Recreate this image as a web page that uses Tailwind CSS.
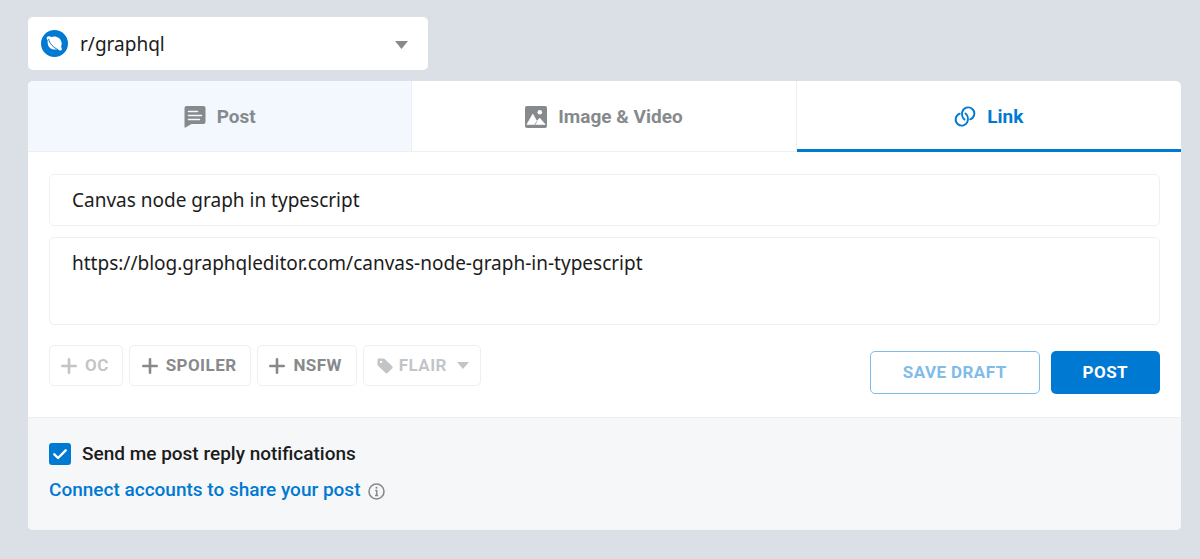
<!DOCTYPE html>
<html lang="en">
<head>
    <meta charset="UTF-8">
    <meta name="viewport" content="width=device-width, initial-scale=1.0">
    <title>Submit to r/graphql</title>
    <script src="https://cdn.jsdelivr.net/npm/@tailwindcss/browser@4"></script>
</head>
<body class="min-h-screen bg-[#dae0e6] pt-[17px] pr-[19px] pb-7 pl-7 font-[Roboto,sans-serif]">
    <!-- Community picker -->
    <div class="relative h-[53px] w-full max-w-[400px] rounded-[5px] bg-white">
        <svg class="pointer-events-none absolute top-[13px] left-[13px] size-[27px]" viewBox="0 0 27 27" aria-hidden="true">
            <circle cx="13.5" cy="13.5" r="13.5" fill="#0079d3" />
            <path d="M6 7c1-1 2.800-.9 4.500.1 4.200-1.700 9 .6 10 5.200.4 1.700.1 3-.4 4.300.8 1.600 1 3 .3 3.600-.9.800-2.500.300-4.300-.8C11.500 20.300 7.600 18.200 6.800 14c-.3-1.200-.2-2.300 0-3.200C5.700 9 5.300 7.700 6 7Z" fill="#fff" />
            <path d="M7.600 9.300c.6 3.700 4.600 8.400 9.400 10.300" fill="none" stroke="#0079d3" stroke-width="1" stroke-linecap="round" />
        </svg>
        <select aria-label="Community" class="h-full w-full appearance-none rounded-[5px] bg-transparent pt-0.5 pr-12 pl-[52px] font-['Noto_Sans',sans-serif] text-[19px] text-[#1c1c1c]">
            <option>r/graphql</option>
        </select>
        <svg class="pointer-events-none absolute top-6 right-5 h-2 w-[13px]" viewBox="0 0 13 8" fill="#878a8c" aria-hidden="true">
            <path d="M0 0h13L6.500 8Z" />
        </svg>
    </div>

    <main class="mt-[11px] overflow-hidden rounded-[5px] bg-white">
        <!-- Post type tabs -->
        <div role="tablist" class="grid h-[71px] grid-cols-3 text-[19px] font-bold text-[#878a8c]">
            <button role="tab" class="flex items-center justify-center gap-[11px] border-r border-b border-[#edeff1] bg-[#f2f8fe] pt-0.5">
                <svg class="size-[22px]" viewBox="0 0 22 22" aria-hidden="true">
                    <path d="M2.500 0h17A2 2 0 0 1 21.500 2v14a2 2 0 0 1-2 2H7.500L1.500 21.500a.7.700 0 0 1-1-.6V2a2 2 0 0 1 2-2Z" fill="currentColor" />
                    <path d="M4.500 5.500h9M4.500 9.500h13M4.500 13.500h11" stroke="#f2f8fe" stroke-width="1.500" stroke-linecap="round" />
                </svg>
                Post
            </button>
            <button role="tab" class="flex items-center justify-center gap-[11px] border-r border-b border-[#edeff1] pt-0.5">
                <svg class="size-[22px]" viewBox="0 0 22 22" aria-hidden="true">
                    <rect width="22" height="22" rx="2" fill="currentColor" />
                    <circle cx="14.800" cy="6.200" r="2.300" fill="#fff" />
                    <path d="M1.800 18.500 7.800 8l4.100 7.300 2.800-3.300 5.600 6.500Z" fill="#fff" stroke="#fff" stroke-width=".6" stroke-linejoin="round" />
                    <path d="m9.800 18.800 2.200-3.500" stroke="currentColor" stroke-width=".8" />
                </svg>
                Image &amp; Video
            </button>
            <button role="tab" aria-selected="true" class="flex items-center justify-center gap-[11px] border-b-3 border-[#0079d3] pt-1 text-[#0079d3]">
                <svg class="size-[22px]" viewBox="0 0 22 22" fill="none" stroke="currentColor" stroke-width="1.900" stroke-linecap="round" aria-hidden="true">
                    <path d="M16.200 13.300A6.100 6.100 0 1 0 8.300 6.100C7.500 9 8.900 12.300 10.500 13.600" />
                    <path d="M5.800 7.700A6.100 6.100 0 1 0 13.700 14.900C14.500 12 13.100 8.700 11.500 7.400" />
                </svg>
                Link
            </button>
        </div>

        <!-- Fields -->
        <div class="px-[21px] pt-[22px] pb-[23px]">
            <div class="flex flex-col gap-[11px] font-['Noto_Sans',sans-serif] text-[19px] leading-[26px] text-[#1c1c1c]">
                <input type="text" aria-label="Title" value="Canvas node graph in typescript" class="h-[52px] w-full rounded-[5px] border border-[#edeff1] px-[22px]">
                <textarea aria-label="Url" class="h-[88px] w-full resize-none rounded-[5px] border border-[#edeff1] px-[22px] py-3">https://blog.graphqleditor.com/canvas-node-graph-in-typescript</textarea>
            </div>

            <div class="mt-5 flex flex-wrap items-start justify-between gap-4 text-[17px] font-bold tracking-wide">
                <div class="flex flex-wrap gap-[6px] text-[#878a8c]">
                    <button disabled class="flex h-[41px] items-center gap-2 rounded-[5px] border border-[#edeff1] pr-[13px] pl-[11px] text-[#878a8c]/50">
                        <svg class="size-4" viewBox="0 0 16 16" stroke="currentColor" stroke-width="2.600" stroke-linecap="round" aria-hidden="true"><path d="M8 1.300v13.400M1.300 8h13.400" /></svg>
                        OC
                    </button>
                    <button class="flex h-[41px] items-center gap-2 rounded-[5px] border border-[#edeff1] pr-[14px] pl-3">
                        <svg class="size-4" viewBox="0 0 16 16" stroke="currentColor" stroke-width="2.600" stroke-linecap="round" aria-hidden="true"><path d="M8 1.300v13.400M1.300 8h13.400" /></svg>
                        SPOILER
                    </button>
                    <button class="flex h-[41px] items-center gap-2 rounded-[5px] border border-[#edeff1] pr-[14px] pl-[11px]">
                        <svg class="size-4" viewBox="0 0 16 16" stroke="currentColor" stroke-width="2.600" stroke-linecap="round" aria-hidden="true"><path d="M8 1.300v13.400M1.300 8h13.400" /></svg>
                        NSFW
                    </button>
                    <button disabled class="flex h-[41px] items-center gap-[6px] rounded-[5px] border border-[#edeff1] pr-[11px] pl-[13px] text-[#878a8c]/50">
                        <svg class="size-4" viewBox="0 0 16 16" fill="currentColor" aria-hidden="true">
                            <path fill-rule="evenodd" d="M1.500.5h5c.5 0 .9.200 1.200.5l7.500 7.300c.6.600.6 1.300 0 1.900l-4.600 4.800c-.6.600-1.300.6-1.900 0L1 7.800c-.3-.3-.5-.7-.5-1.100V1.500a1 1 0 0 1 1-1ZM4 2.700a1.200 1.200 0 1 0 0 2.400 1.200 1.200 0 0 0 0-2.400Z" />
                        </svg>
                        FLAIR
                        <svg class="ml-1 h-[7px] w-3" viewBox="0 0 12 7" fill="currentColor" aria-hidden="true"><path d="M0 0h12L6 7Z" /></svg>
                    </button>
                </div>
                <div class="mt-[6px] flex gap-[11px]">
                    <button disabled class="h-[43px] rounded-[5px] border border-[#7fbce9] px-8 text-[#7fbce9]">SAVE DRAFT</button>
                    <button class="h-[43px] rounded-[5px] bg-[#0079d3] px-8 text-white">POST</button>
                </div>
            </div>
        </div>

        <!-- Notification settings -->
        <div class="flex flex-col items-start gap-3 border-t border-[#edeff1] bg-[#f6f7f8] px-[21px] pt-6 pb-7 text-[19px] leading-6 font-medium">
            <label class="flex items-center gap-[11px] text-[#1c1c1c]">
                <span class="grid size-[22px] place-items-center">
                    <input type="checkbox" checked class="col-start-1 row-start-1 size-[22px] appearance-none rounded-[3px] border-2 border-[#878a8c] checked:border-[#0079d3] checked:bg-[#0079d3]">
                    <svg class="pointer-events-none col-start-1 row-start-1 size-[22px]" viewBox="0 0 22 22" fill="none" stroke="#fff" stroke-width="2.400" stroke-linecap="round" stroke-linejoin="round" aria-hidden="true"><path d="m5.300 11.300 3.800 3.700 7.600-7.700" /></svg>
                </span>
                Send me post reply notifications
            </label>
            <div class="flex items-center gap-2">
                <a href="#" class="text-[#0079d3]">Connect accounts to share your post</a>
                <svg class="mt-0.5 size-[17px]" viewBox="0 0 17 17" fill="none" stroke="#878a8c" stroke-width="1.600" aria-hidden="true">
                    <circle cx="8.500" cy="8.500" r="7.500" />
                    <path d="M7.200 7.400h1.500v5M7 12.400h3.200" stroke-width="1.500" />
                    <circle cx="8.500" cy="4.800" r="1" fill="#878a8c" stroke="none" />
                </svg>
            </div>
        </div>
    </main>
</body>
</html>
